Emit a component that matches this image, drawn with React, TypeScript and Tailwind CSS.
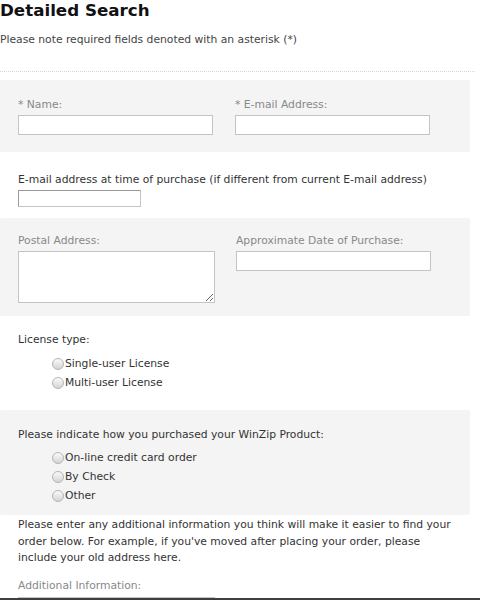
import React from 'react';

const Radio: React.FC<{ label: string }> = ({ label }) => (
  <label className="flex items-center h-[19px] pl-[52px] text-[#333]">
    <span className="w-[12px] h-[12px] rounded-full border border-[#b5b5b5] bg-gradient-to-b from-[#fafafa] to-[#d4d4d4] mr-[1px]" />
    <span>{label}</span>
  </label>
);

const TextInput: React.FC<{ className?: string }> = ({ className = '' }) => (
  <input type="text" className={`block bg-white border border-[#c4c4c4] outline-none ${className}`} />
);

const App: React.FC = () => {
  return (
    <div className="w-[480px] h-[600px] overflow-hidden bg-white font-['DejaVu_Sans',sans-serif] text-[10.75px] leading-[16px] text-[#333] relative">
      <h1 className="font-['DejaVu_Sans',sans-serif] font-bold text-[16.7px] leading-[20px] text-[#111]">Detailed Search</h1>
      <p className="mt-[12px] text-[#444]">Please note required fields denoted with an asterisk (*)</p>
      <div className="mt-[23px] w-[475px] border-t border-dotted border-[#d6d6d6]" />

      <form>
        {/* name + email */}
        <div className="mt-[8px] w-[470px] bg-[#f4f4f4] rounded-[2px] pt-[17px] pb-[17px] pl-[18px] flex gap-[22px]">
          <div>
            <div className="text-[#888]">* Name:</div>
            <TextInput className="mt-[2px] w-[195px] h-[20px]" />
          </div>
          <div>
            <div className="text-[#888]">* E-mail Address:</div>
            <TextInput className="mt-[2px] w-[195px] h-[20px]" />
          </div>
        </div>

        {/* old email */}
        <div className="pl-[18px] mt-[20px]">
          <div>E-mail address at time of purchase (if different from current E-mail address)</div>
          <TextInput className="mt-[2px] w-[123px] h-[17px] border-t-[#9a9a9a] border-l-[#9a9a9a]" />
        </div>

        {/* postal + date */}
        <div className="mt-[11px] w-[470px] bg-[#f4f4f4] rounded-[2px] pt-[15px] pb-[13px] pl-[18px] flex gap-[21px]">
          <div>
            <div className="text-[#888]">Postal Address:</div>
            <textarea className="block mt-[2px] w-[197px] h-[52px] bg-white border border-[#c4c4c4] outline-none resize-y" />
          </div>
          <div>
            <div className="text-[#888]">Approximate Date of Purchase:</div>
            <TextInput className="mt-[2px] w-[195px] h-[20px]" />
          </div>
        </div>

        {/* license */}
        <div className="mt-[16px] pl-[18px]">License type:</div>
        <div className="mt-[6px]">
          <Radio label="Single-user License" />
          <Radio label="Multi-user License" />
        </div>

        {/* purchase */}
        <div className="mt-[18px] w-[470px] bg-[#f4f4f4] rounded-[2px] pt-[17px] pb-[10px]">
          <div className="pl-[18px]">Please indicate how you purchased your WinZip Product:</div>
          <div className="mt-[5px]">
            <Radio label="On-line credit card order" />
            <Radio label="By Check" />
            <Radio label="Other" />
          </div>
        </div>

        <p className="mt-[2px] ml-[18px] w-[440px] leading-[16.5px]">
          Please enter any additional information you think will make it easier to find your order below. For example, if you've moved after placing your order, please include your old address here.
        </p>

        <div className="mt-[11px] pl-[18px] text-[#888]">Additional Information:</div>
        <div className="pl-[18px]">
          <textarea className="block mt-[3px] w-[197px] h-[52px] bg-white border border-[#c4c4c4] outline-none" />
        </div>
      </form>
      <div className="absolute left-0 right-0 bottom-0 h-[2px] bg-[#3a3f44]" />
    </div>
  );
};

export default App;
